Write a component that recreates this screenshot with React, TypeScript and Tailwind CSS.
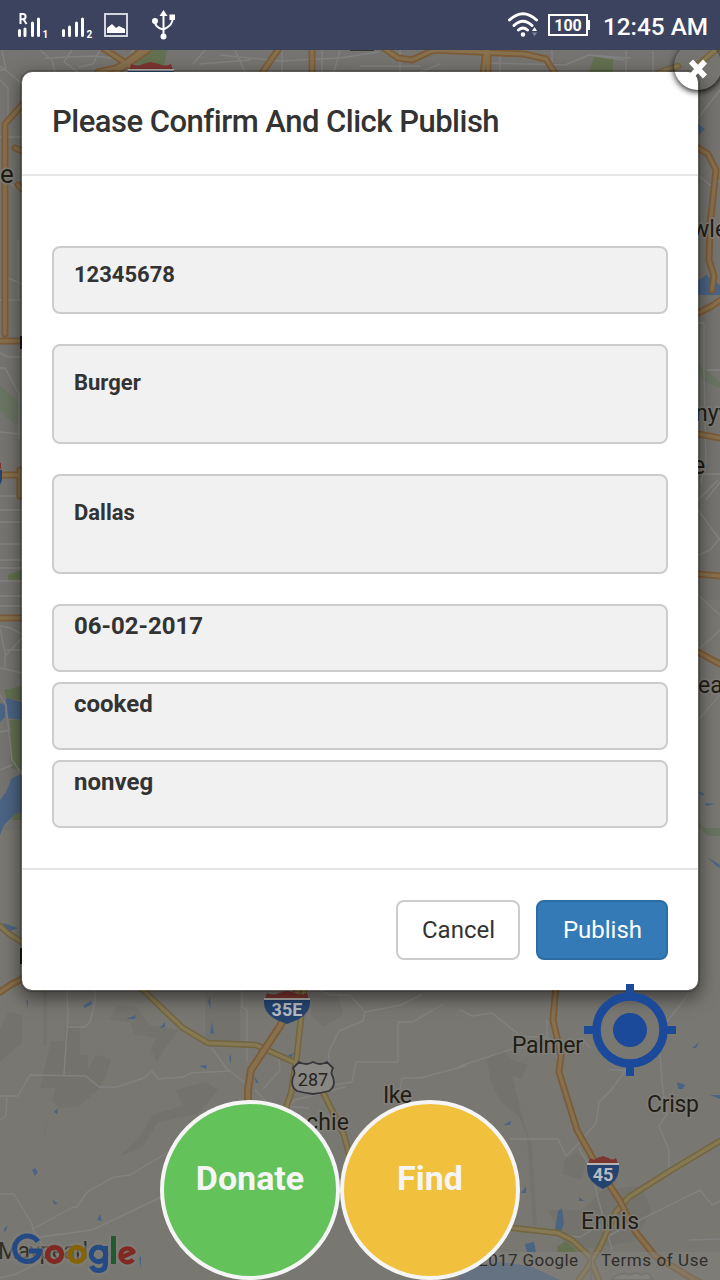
import React from "react";

type Stroke = { d: string; w?: number };

const streets: Stroke[] = [
  { d: "M40 50l12 10 3 12M72 50l-8 12 14 10M100 50l-7 14-14 3M134 50l-6 8 4 14M205 50l-12 14M235 50l10 22M282 50v22M322 50v22M340 50l-6 22M400 50v22M440 64l-20 8M500 50v22M552 50v22M626 50v22M653 50v22" },
  { d: "M45 58l50-2 35 4M220 55l60 6 60-3 38-6M485 63l80 2 24-10 35 5M360 66h60M590 55l40 3M200 64l50-4" },
  { d: "M0 66l8 6 14 12M0 70h6l-4-20M0 80l8 8v45M0 137h22M10 183l12 10M8 278l14 6M0 300h22M18 240v60M0 353l8 4 14 0M0 368l5 0 14 26v45M0 432l20 2M0 496h22M0 510h22M0 522h22" },
  { d: "M0 544h22M0 560h22M0 568h22M0 581h22M0 596h22M0 606h22M0 628l5 25 0 14M0 668l22 5M5 656l17-18M6 650h16M0 626l10 2 12 6M0 695l6 10 6 55 10 14M0 770l12-5M0 732l10-2" },
  { d: "M67 990l1 25-4 59M95 990v12l-5 20-6 5H68M0 1096h18l12-21 56 1 13 11 18 0 27-9 8-7 6 8 25-2 8-4 38-2M7 1096l-1 20-6 4M242 990v17l5 3v52" },
  { d: "M212 1048l14 20 18 14M0 1194h14l18 30 1 5 40-22h4l10-15 27-15 16-2 40-24M32 1238l60-8 80-38M32 1228l16 26M0 1278l16-4 24-12" },
  { d: "M320 990l10 5 20 0 15 17-2 9-24 10-10 20v14l-10 10h-10l-6 12M365 1012l36-7 20-10M443 1004l-30 18h-15v40h-42M356 1062l-4 20-24 4M400 1090l2-12h18l45-12M255 1090l14 15 40 3M270 1125l25-25 50-13M278 1050l2 20-16 18" },
  { d: "M460 1010l12 6 20-3 30 24 20 0 28 8 12-7 8 10M460 1066l55-18 30 0M547 1020v20l14 25M626 1070l-15 20-12 12-3 21-12 14M660 1055l3 35 4 24-8 12 10 24v20M688 995l-28 35M637 1058l-7 12-20 0M510 1139h48l8 17 15-15M579 1148l14 25 4 22 15 55M600 1240l100-50 12 15 8-4M555 1235l25 2 20-12M690 1240l30-1" },
  { d: "M698 175l12 10 10-4M698 118l22-28M698 323h6v50l2 90-5 20M698 474h22M706 500l14-18M698 555l12-5 10-12M698 510l22 30M698 595l22 20M698 650l22-20M698 720l22-25M698 500l20-20M707 370h13" },
];

const orangeRoads: Stroke[] = [
  { d: "M98 72l18-4 12-7 15-12M103 48l36 24M148 50l-35 24", w: 7 },
  { d: "M282 44l-22 32M312 44v30", w: 7 },
  { d: "M378 44l20 14 14 2 22-10 45 2 45 2 22 5 10 16M488 50v24M486 50l-3 24", w: 7 },
  { d: "M22 105L5 124v210M15 148l8 3M0 341h22M18 185l4 4M0 475h22M20 470v26", w: 7 },
  { d: "M0 618h22M0 992l12-8 14-7", w: 7 },
  { d: "M698 148l10 6 8 16-6 55-1 35 5 16-2 14M698 313l14-7 10-7M698 434l22 4M698 574l22 2M698 652l22 12", w: 7 },
  { d: "M298 990l-18 36-29 44-3 20v30", w: 8 },
  { d: "M556 985l-3 35 8 35-2 17 18 58 20 36 23 35 15 30 20 25 40 24 30 15", w: 7 },
];

const yellowRoads: Stroke[] = [
  { d: "M138 985l28 27 17 16 25 15 48 2 40 18M304 990l-7 65-6 38-6 18M322 1090l22 45 6 23", w: 5 },
  { d: "M0 926l9 8 13 8M678 66l-18 6M697 66l16-14 7-5", w: 5 },
  { d: "M720 1141l-50 30-41 26-13 15-16 35-12 20-14 20M513 1228l45 5 14 7 17 16 10 24", w: 5 },
];

const water = [
  "M0 703l5 2 0 12-5 5zM6 698l16 4v18l-15-2zM0 800l6-8 6-14 10-4v37l-8 4-10 10-4 10z",
  "M698 281l8-6 14 10v10l-22 0zM698 124l7 5-6 6zM3 923l15 5-13 5z",
  "M83 1006l8-5 1 3-7 4zM126 1019l10-4-1 4zM160 1028l5-6v5zM208 1002l2-6 1 14zM210 1033l2-11 2 12zM199 1066l8-1-1 4zM229 1058l2-4v10zM100 1080l6 1zM54 1112l4-4-1 6zM32 1170l3-2 3 4-3 4zM52 1199l6 5-4 0zM97 1220l3-6 2 7zM4 1229l4-4-3 8zM139 1258l2 10 0-12zM26 1001l2 7 0-8z",
  "M558 1211l4-3 2 15-3 9-6-2zM525 1244l9-2 2 10-9 0zM677 1082l8 3-2 4-5 0zM692 1048l7-6-3 6zM710 1095l10 0v4zM503 1125l8-4-1 4zM521 1193l5-7 0 7zM579 1197l5 4-5 0zM288 1055l6-2-3 5zM254 1076l5 7-3 0z",
  "M460 1270l40-8 30 4 30 14H460zM698 792l6 1-1 3zM705 803l10 1-9 2zM707 857l13 8-1 3zM713 905l7-4z",
];

const greens = [
  "M135 50h32l-3 17-30-3zM595 55l18 3v14h-24zM8 575l14-5v11H8zM4 690l18-4v14l-15-1zM10 720h12v50l-11-2zM16 805l6-2v17h-10zM557 1247l9-6 12 11-20 0zM446 70l8 2z",
];
const paleGreens = ["M0 386l12 10 10 10-6 20-16-15zM698 365l8 5 14 12v6l-18-8zM698 822l8 6h14v8h-12l-10-10z"];

function Shield({ x, y, label, w }: { x: number; y: number; label: string; w: number }) {
  return (
    <g transform={`translate(${x} ${y})`}>
      <path d={`M1 6L3 0Q${w * 0.22} 3 ${w * 0.32} 0L${w / 2} -2L${w * 0.68} 0Q${w * 0.78} 3 ${w - 3} 0L${w - 1} 6z`} fill="#7d3530" />
      <path d={`M0 5H${w}V7H0z`} fill="#b5b4b1" />
      <path d={`M0 7H${w}Q${w + 1} 20 ${w * 0.72} 27L${w / 2} 31L${w * 0.28} 27Q-1 20 0 7z`} fill="#24446f" />
      <text x={w / 2} y="23" textAnchor="middle" fontSize="18" fontWeight="700" fill="#b7bcc2">{label}</text>
    </g>
  );
}

function MapCanvas() {
  return (
    <svg className="absolute inset-0 h-[1280px] w-[720px]" viewBox="0 0 720 1280" fontFamily="Roboto, sans-serif">
      <rect width="720" height="1280" fill="#797772" />
      <path d="M0 50H720V72H0zM0 50H22V830H0zM698 50H720V600H698z" fill="#767470" />
      <path
        fill="#74726d"
        d="M43 980v66h4v-66zM0 1030l8-18 14 3v28l-22 18zM51 1041h14v-15l15-2v31l8 0v15l8-15 15 4-6 20-17 9-48 0zM117 1005l20 2 12 18 30 5-15 20-7 12-6-12 5-12-22-4-4-12-20-2zM60 1075h45l-6 14-20 17-20 2-7-8zM176 1090l30-8 12 8-20 24-40 8-16 25-22 9 18-17 16-25 29-8zM46 1122l-2 17 3-17zM205 992l35 0v50h-35zM310 995h28l5 20-20 12-12-12zM487 1060l15-10 10 10 15 5-5 14-10-3 10 40 10 30 5 80h-4l-6-90-8-20-18-14-10-20zM565 1160l12-8 10 10-6 18-18-6zM548 1210h35l20-20 38-4 10 25-17 30-60 10-12-12z"
      />
      {greens.map((d, i) => <path key={i} d={d} fill="#647150" />)}
      {paleGreens.map((d, i) => <path key={i} d={d} fill="#6a7462" />)}
      {water.map((d, i) => <path key={i} d={d} fill="#4b6484" />)}
      <g fill="none" strokeLinejoin="round" strokeLinecap="round">
        {streets.map((s, i) => <path key={i} d={s.d} stroke="#828281" strokeWidth="1.4" />)}
        {yellowRoads.map((s, i) => <path key={i} d={s.d} stroke="#72653f" strokeWidth={(s.w ?? 5) + 1.5} />)}
        {yellowRoads.map((s, i) => <path key={i} d={s.d} stroke="#857954" strokeWidth={(s.w ?? 5) - 1.5} />)}
        {orangeRoads.map((s, i) => <path key={i} d={s.d} stroke="#7c5b37" strokeWidth={s.w} />)}
        {orangeRoads.map((s, i) => <path key={i} d={s.d} stroke="#86704e" strokeWidth={(s.w ?? 7) - 3.5} />)}
      </g>
      <path d="M350 48h24v3h-24z" fill="#383733" />
      <Shield x={128} y={64} label="" w={46} />
      <Shield x={264} y={993} label="35E" w={46} />
      <Shield x={587} y={1158} label="45" w={32} />
      <path d="M-28 463H1v6h-29z" fill="#7d3530" />
      <path d="M0 470h2v10l-2 5z" fill="#24446f" />
      <path d="M299 1062q7 4 14 0 7 4 14 0l6 6q-3 5 0 9 3 10-4 14-8 2-16 3-8-1-16-3-7-4-4-14 3-4 0-9z" fill="#898783" stroke="#36363a" strokeWidth="1.8" />
      <text x="313" y="1085.500" textAnchor="middle" fontSize="18" fill="#27241f">287</text>
      <path d="M616 1276q8-4 13-1 8-4 12 0l7-2 5 7h-42z" fill="#84827e" stroke="#686763" strokeWidth="1.5" />
      <g className="fill-[#211d14] stroke-[#807e79] [paint-order:stroke]" strokeWidth="3" fontSize="23">
        <text x="0" y="183" fontSize="26">e</text>
        <text x="692" y="237">wle</text>
        <text x="695" y="421">nyv</text>
        <text x="692" y="474" fontSize="25">e</text>
        <text x="698" y="693">ea</text>
        <text x="512" y="1052.500" textLength="71">Palmer</text>
        <text x="647" y="1111.500" textLength="52">Crisp</text>
        <text x="383" y="1102.500" textLength="29">Ike</text>
        <text x="306" y="1129.500" textLength="43">chie</text>
        <text x="581" y="1228.500" textLength="58">Ennis</text>
        <text x="-2" y="1258.500" textLength="90" opacity=".8">Maypearl</text>
      </g>
      <path d="M20 336h3v13h-3zM20 948h3v16h-3z" fill="#1c1b18" />
      <rect x="460" y="1252" width="260" height="28" fill="#85837f" opacity=".45" />
      <path d="M591 1252v28" stroke="#777570" strokeWidth="1.5" />
      <g fill="#2f2e2c" fontSize="17">
        <text x="460" y="1266" textLength="118">© 2017 Google</text>
        <text x="601" y="1266" textLength="107">Terms of Use</text>
      </g>
      {[{ s: "#807e79", w: 10 }, { s: "", w: 5 }].map(({ s, w }) => (
        <g key={w} fill="none" strokeWidth={w} strokeLinejoin="round" opacity={s ? 0.6 : 1}>
          <path d="M38 1241.500a12.800 12.800 0 1 0 2 9.500H29" stroke={s || "#244a86"} />
          <circle cx="54.500" cy="1254.500" r="7.200" stroke={s || "#812822"} />
          <circle cx="77" cy="1254.500" r="7.200" stroke={s || "#846407"} />
          <path d="M105.500 1246v17q0 7.500-7 7.500-5 0-7-4.500M98.500 1247.300a7.200 7.200 0 1 0 .1 0" stroke={s || "#244a86"} />
          <path d="M113.500 1236v28" stroke={s || "#205a31"} />
          <path d="M121 1257.500l12.500-5.500a6.900 6.900 0 1 0-.5 7.500" stroke={s || "#812822"} strokeWidth={w - 0.5} />
        </g>
      ))}
    </svg>
  );
}

function Signal({ roaming, sim }: { roaming?: boolean; sim: string }) {
  return (
    <svg className="h-[30px] w-[32px]" viewBox="0 0 32 30" fill="none" stroke="#fff">
      {roaming ? (
        <>
          <path d="M2.500 19.500V24.500M8 18V24.500M15.500 12V24.500M21.500 8V24.500" strokeWidth="3" strokeLinecap="round" />
          <path d="M3.500 13V3h2.500a2.600 2.600 0 0 1 0 5.200h-2.500M6.500 8.200l3 4.800" strokeWidth="2" />
        </>
      ) : (
        <path d="M2.500 19.500V24.500M8.500 16V24.500M15.500 12V24.500M21.500 8V24.500" strokeWidth="3" strokeLinecap="round" />
      )}
      <text x="25.500" y="26.500" fontSize="10" fontWeight="700" fill="#fff" stroke="none" fontFamily="Roboto, sans-serif">{sim}</text>
    </svg>
  );
}

function StatusBar() {
  return (
    <header className="relative z-20 flex h-[50px] items-center bg-[#3b435f] text-white">
      <div className="flex h-full items-center pl-[17px]">
        <div className="flex gap-[12px] pt-0.5">
          <Signal roaming sim="1" />
          <Signal sim="2" />
        </div>
        <svg className="ml-[11px] h-[24px] w-[24px]" viewBox="0 0 24 24">
          <rect x="1" y="1" width="22" height="22" fill="none" stroke="#d3d6de" strokeWidth="2" />
          <path d="M3 20v-5l5-4 4 4 3-2 6 3v4z" fill="#fff" />
        </svg>
        <svg className="ml-[23px] h-[30px] w-[26px]" viewBox="0 0 26 30" fill="none" stroke="#fff" strokeWidth="2">
          <path d="M12.500 25V4M4 11q0 7 8.500 8.500M21.500 8q1 7-9 11.500" />
          <path d="M12.500 0l4 6h-8zM1 11a3 3 0 1 0 6 0 3 3 0 1 0-6 0M18.500 4.500h5.500v5.500h-5.500zM9.500 26.500a3 3 0 1 0 6 0 3 3 0 1 0-6 0" fill="#fff" stroke="none" />
        </svg>
      </div>
      <div className="ml-auto flex items-center pr-[12px]">
        <svg className="h-[26px] w-[32px]" viewBox="0 0 32 26" fill="none" stroke="#fff" strokeWidth="3" strokeLinecap="round">
          <path d="M1.500 8q13.500-12.500 27 0M6 13.500q9-8.500 18 0M10.500 18q4.500-4 9 0" />
          <circle cx="15" cy="22.500" r="2.200" fill="#fff" stroke="none" />
          <path d="M24 19l2.500-4 2.500 4z" fill="#fff" stroke="none" />
          <path d="M24 20.500h5l-2.500 4z" fill="#7b829b" stroke="none" />
        </svg>
        <div className="ml-[8px] flex items-center">
          <div className="flex h-[22px] w-[40px] items-center justify-center border-2 border-white pt-px font-[Roboto] text-[16px] font-bold leading-none">100</div>
          <div className="h-[10px] w-[2px] bg-white" />
        </div>
        <time className="ml-[13px] w-[105px] whitespace-nowrap pt-[3px] text-[24.300px] font-medium leading-[28px]">12:45 AM</time>
      </div>
    </header>
  );
}

const fields = [
  { value: "12345678", style: "mt-[70px] h-[68px] pt-[12px] text-[22px]" },
  { value: "Burger", style: "mt-[30px] h-[100px] pt-[22px] text-[22px]" },
  { value: "Dallas", style: "mt-[30px] h-[100px] pt-[22px] text-[22px]" },
  { value: "06-02-2017", style: "mt-[30px] h-[68px] pt-[5px] text-[24px]" },
  { value: "cooked", style: "mt-[10px] h-[68px] pt-[5px] text-[24px]" },
  { value: "nonveg", style: "mt-[10px] h-[68px] pt-[5px] text-[24px]" },
];

function ConfirmDialog() {
  return (
    <section className="relative mx-[20px] mt-[20px] flex h-[922px] flex-col rounded-[12px] border-2 border-black/20 bg-white bg-clip-padding text-[#333] shadow-[0_6px_18px_rgba(0,0,0,0.5)]">
      <h1 className="h-[104px] shrink-0 border-b-2 border-[#e5e5e5] pl-[30px] pt-[33px] text-[31px] font-medium leading-[34px] tracking-[-0.500px]">
        Please Confirm And Click Publish
      </h1>
      <div className="flex grow flex-col px-[30px]">
        {fields.map((f) => (
          <div key={f.value} className={`${f.style} rounded-[8px] border-2 border-[#ccc] bg-[#f1f1f1] pl-[20px] font-bold leading-[30px]`}>
            {f.value}
          </div>
        ))}
      </div>
      <footer className="flex h-[122px] shrink-0 items-start justify-end gap-4 border-t-2 border-[#e5e5e5] pr-[30px] pt-[30px] text-[24px]">
        <button className="h-[60px] w-[124px] rounded-[8px] border-2 border-[#ccc] bg-white pl-px">Cancel</button>
        <button className="h-[60px] w-[132px] rounded-[8px] border-2 border-[#2e6da4] bg-[#337ab7] pl-px text-white">Publish</button>
      </footer>
    </section>
  );
}

export default function App() {
  return (
    <main className="relative flex h-[1280px] w-[720px] flex-col overflow-hidden bg-[#797772] font-[Roboto,sans-serif]">
      <MapCanvas />
      <StatusBar />
      <ConfirmDialog />
      <button aria-label="Close" className="absolute left-[674px] top-[42px] z-10 flex h-[48px] w-[48px] items-center justify-center rounded-full shadow-[0_2px_6px_rgba(0,0,0,0.9)]">
        <svg className="mt-[5px] h-[22px] w-[22px]" viewBox="0 0 22 22">
          <path d="M4 3.500l14 15M18 3.500L4 18.500" stroke="#fff" strokeWidth="5.500" />
        </svg>
      </button>
      <button aria-label="My location" className="absolute left-[584px] top-[984px] h-[92px] w-[92px]">
        <svg viewBox="0 0 92 92" fill="none" stroke="#1c4a9b" strokeWidth="8">
          <circle cx="46" cy="46" r="33.500" strokeWidth="8.500" />
          <circle cx="46" cy="46" r="17" fill="#1c4a9b" stroke="none" />
          <path d="M46 0v12M46 80v12M0 46h12M80 46h12" />
        </svg>
      </button>
      <nav className="relative mt-auto flex pl-[160px] text-[34px] font-bold text-[#f5f5f5]">
        <button className="h-[180px] w-[180px] rounded-full border-4 border-[#f5f5f5] bg-[#63c25a] pb-[24px]">Donate</button>
        <button className="h-[180px] w-[180px] rounded-full border-4 border-[#f5f5f5] bg-[#f1c13d] pb-[24px]">Find</button>
      </nav>
    </main>
  );
}
